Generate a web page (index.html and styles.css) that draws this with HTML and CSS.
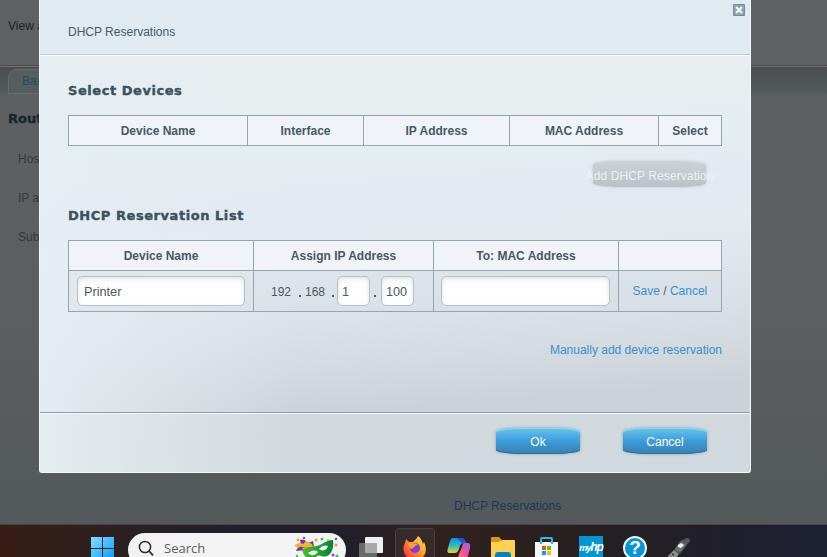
FILE: index.html
```html
<!DOCTYPE html>
<html lang="en">
<head>
<meta charset="utf-8">
<title>DHCP Reservations</title>
<link rel="stylesheet" href="styles.css">
</head>
<body>
<div class="screen">
  <main class="page">
    <div class="view">View all</div>
    <div class="tabs"><span class="tab">Basic</span></div>
    <h2 class="page-title">Router</h2>
    <p class="label">Host</p>
    <p class="label">IP address</p>
    <p class="label">Subnet</p>
    <p class="page-link">DHCP Reservations</p>
  </main>

  <section class="modal">
    <header class="modal-head">DHCP Reservations
      <svg class="close" width="12" height="12" viewBox="0 0 12 12"><rect width="12" height="12" rx="1" fill="#8fa3af"/><rect x=".5" y=".5" width="11" height="11" rx=".5" fill="none" stroke="#748b98"/><path d="M3 3 9 9M9 3 3 9" stroke="#f1f5f7" stroke-width="2.2"/></svg>
    </header>
    <div class="modal-body">
      <h3>Select Devices</h3>
      <div class="grid devices">
        <b>Device Name</b><b>Interface</b><b>IP Address</b><b>MAC Address</b><b>Select</b>
      </div>
      <div class="add-row"><span class="btn disabled">Add DHCP Reservation</span></div>
      <h3>DHCP Reservation List</h3>
      <div class="grid list">
        <b>Device Name</b><b>Assign IP Address</b><b>To: MAC Address</b><b></b>
        <div class="cell"><span class="field name">Printer</span></div>
        <div class="cell ip"><span class="oct first">192</span><i class="dot"></i><span class="oct second">168</span><i class="dot"></i><span class="field octet">1</span><i class="dot last"></i><span class="field octet">100</span></div>
        <div class="cell"><span class="field mac"></span></div>
        <div class="cell actions"><a>Save</a><span> / </span><a>Cancel</a></div>
      </div>
      <div class="manual"><a>Manually add device reservation</a></div>
    </div>
    <footer class="modal-foot"><span class="btn">Ok</span><span class="btn">Cancel</span></footer>
  </section>

  <nav class="taskbar">
    <svg class="win" width="24" height="24" viewBox="0 0 24 24"><defs><linearGradient id="w" x1="0" y1="0" x2="1" y2="1"><stop stop-color="#83dfff"/><stop offset="1" stop-color="#079aff"/></linearGradient></defs><path fill="url(#w)" d="M0 0h11v11H0zM12 0h11v11H12zM0 12h11v11H0zM12 12h11v11H12z"/></svg>
    <div class="search">
      <svg width="16" height="18" viewBox="0 0 16 18"><circle cx="7" cy="7" r="5.6" fill="none" stroke="#292929" stroke-width="1.5"/><path d="m11 11 4 4.4" stroke="#292929" stroke-width="1.8"/></svg>
      <span>Search</span>
      <svg class="mask" width="48" height="26" viewBox="0 0 48 26">
        <defs><linearGradient id="m"><stop stop-color="#4cbf2a"/><stop offset="1" stop-color="#06813a"/></linearGradient></defs>
        <path d="M8 14 6 5q4-2 8 3l5-2 1 6z" fill="#8127b5"/><path d="M10 15 0 11q4-5 9-2l3-3 6 3 2 5z" fill="#f3b42a"/><path d="M12 15 2 16q2-5 7-4l10 1-3 4z" fill="#7430b8"/><path d="m8 13 10-2 1 3-7 2z" fill="#f7c843"/>
        <path fill="url(#m)" fill-rule="evenodd" d="M8 15C14 10 20 13 26 10 31 7 34 5 39 5 40 12 38 19 33 21 27 23 26 18 22 22 18 28 11 25 8 15ZM14 18C17 15 21 15 24 17 21 21 17 21 14 18ZM25 14C28 10 32 10 34 11 33 15 29 17 25 14Z"/>
        <g fill="#8b49e8"><circle cx="10" cy="3" r="1.3"/><circle cx="42" cy="4" r="1.3"/><circle cx="39" cy="20" r="1.5"/></g>
        <g fill="#dfa82d"><circle cx="4" cy="5" r="1.4"/><circle cx="22" cy="5" r="1.5"/><circle cx="34" cy="5" r="1"/><circle cx="42" cy="10" r="1.5"/></g><g fill="#27c96d"><circle cx="28" cy="4" r="1.5"/><circle cx="3" cy="21" r="1.3"/><circle cx="43" cy="21" r="1.5"/></g>
      </svg>
    </div>
    <svg class="task" width="24" height="24" viewBox="0 0 24 24"><rect x="6" width="18" height="16" rx="1" fill="#efefef"/><rect y="6" width="18" height="18" rx="1" fill="#666a69"/><path d="M6 6h12v10H6z" fill="#a9a9a9"/></svg>
    <div class="active"><svg width="24" height="24" viewBox="0 0 24 24"><defs><linearGradient id="f" x1="1" y1="0" x2="0" y2="1"><stop stop-color="#fff044"/><stop offset=".45" stop-color="#ff9a23"/><stop offset="1" stop-color="#ff1657"/></linearGradient></defs><path fill="url(#f)" d="M3 3 6 6 10 6C11 4 14 3 15 0 18 2 19 5 20 8L21 6C26 17 20 24 12 24 2 24-2 14 2 7Z"/><circle cx="12" cy="12" r="5" fill="#7540db"/><path d="M5 8C9 6 13 7 15 9 11 9 12 12 8 13z" fill="#ff9d25"/></svg></div>
    <svg class="copilot" width="24" height="24" viewBox="0 0 24 24"><defs><linearGradient id="c1" x1="0" y1="0" x2="0" y2="1"><stop stop-color="#168bea"/><stop offset=".45" stop-color="#20bbc2"/><stop offset="1" stop-color="#e8d42e"/></linearGradient><linearGradient id="c2" x1="1" y1="0" x2="0" y2="1"><stop stop-color="#a45bf2"/><stop offset=".5" stop-color="#f45292"/><stop offset="1" stop-color="#ffac42"/></linearGradient></defs><path d="M6 1h9c3 0 3 5 5 5h-3c-3 0-4 2-5 6l-1 2c-1 2-3 2-5 2H3c-3 0-3-2-2-5l2-7c1-3 2-3 3-3z" fill="url(#c1)"/><path d="M10 1h5c3 0 3 5 5 5h-3c-3 0-4-2-7-5z" fill="#2354cf"/><path d="M17 6h4c3 0 2 3 2 5l-2 8c-1 3-2 5-5 5H8c3-1 3-3 4-7l3-7c1-3 1-4 2-4z" fill="url(#c2)"/></svg>
    <svg class="folder" width="24" height="22" viewBox="0 0 24 22"><path d="M0 1q0-1 1-1h7l3 3h-1v5H0z" fill="#d89911"/><path d="m0 5h8l3-2h12q1 0 1 1v18H0z" fill="#ffd052"/><path d="M4 22v-4q0-3 3-3h10q3 0 3 3v4z" fill="#087fc9"/></svg>
    <svg class="store" width="23" height="24" viewBox="0 0 23 24"><path d="M6 6V2q0-1 1-1h9q1 0 1 1v4" fill="none" stroke="#31b8f3" stroke-width="2"/><path d="M0 5h23v19H0z" fill="#f7f7f7"/><path d="M6 4v3M17 4v3" stroke="#31b8f3" stroke-width="2"/><path d="M7 9h4v4H7z" fill="#f25022"/><path d="M12 9h4v4h-4z" fill="#7fba00"/><path d="M7 14h4v4H7z" fill="#00a4ef"/><path d="M12 14h4v4h-4z" fill="#ffb900"/></svg>
    <div class="hp"><small>my</small>hp</div>
    <div class="help">?</div>
    <svg class="pen" width="22" height="24" viewBox="0 0 22 24"><path d="m12 3 7-3q3 0 3 3l-10 13-6-4z" fill="#54575b"/><path d="m9 8 5-4 4 3-6 7-5-2z" fill="#6f7275"/><path d="m10 7 3-2 3 2-3 3-3-1z" fill="#efefef"/><path d="m6 12 5 4-6 8H0v-6z" fill="#8d8f90"/><path d="m4 16 2 1M2 19l2 1" stroke="#333" stroke-width="1.5"/></svg>
  </nav>
</div>
</body>
</html>
```
FILE: styles.css
```css
* { box-sizing: border-box; }
body { margin: 0; font: 12px/16px "Liberation Sans", Arial, sans-serif; color: #455966; }
.screen { position: relative; width: 827px; height: 557px; overflow: hidden; display: flex; flex-direction: column; }
.page { height: 525px; flex: none; background: linear-gradient(#5d6164, #5b5f62 60%, #53585a); color: #34383c; border-bottom: 1px solid #494542; }
.view { height: 67px; padding: 18px 0 0 8px; color: #1b2228; border-bottom: 1px solid #747170; box-shadow: inset 0 -1px #474b4e; }
.tabs { height: 27px; padding-left: 8px; background: linear-gradient(#484e51, #555a5d); display: flex; }
.tab { width: 70px; border: 1px solid #686e70; border-radius: 9px 0 0; padding: 3px 0 0 13px; color: #12535a; margin-top: 2px; background: #565d5e; }
h2, h3, p { margin: 0; }
h2, h3 { font: bold 13px/18px "DejaVu Sans", sans-serif; letter-spacing: .55px; -webkit-text-stroke: .4px; color: #3a5260; }
.page h2 { color: #1b252e; padding: 16px 0 0 8px; letter-spacing: 0; }
.label { height: 39px; padding-left: 18px; }
.page-title + .label { margin-top: 23px; }
.page-link { padding: 230px 0 0 454px; color: #173b54; }
.modal { position: absolute; left: 39px; top: 0; width: 712px; height: 473px; border: 1px solid #f6f9fa; border-top: 0; border-radius: 0 0 3px 3px; background: linear-gradient(90deg, #e5eef2e0 0, #e5edf180 16%, #e4edf000 36%), linear-gradient(176deg, #e7eff1 12%, #e4edef 35%, #e2eaf2 43%, #e2ebee 51%, #dae2e8 66%, #ccd3d8 83%, #c8d4d9 100%); }
.modal-head { position: relative; height: 56px; padding: 24px 28px 0; background: #e0ebf1; border-bottom: 1px solid #fff; box-shadow: inset 0 -1px #bdc7cc; }
.close { position: absolute; right: 5px; top: 4px; }
.modal-body { height: 356px; padding: 26px 28px 0; }
.grid { display: grid; width: 654px; margin-top: 15px; border: solid #95a5ad; border-width: 1px 0 0 1px; }
.grid > * { border: solid #95a5ad; border-width: 0 1px 1px 0; }
.grid b { height: 30px; background: #f0f4f8; line-height: 31px; text-align: center; }
.devices { grid-template-columns: 179px 116px 146px 149px 63px; }
.list { grid-template-columns: 185px 180px 185px 103px; }
.add-row { height: 42px; margin-bottom: 19px; padding: 15px 16px 0 0; display: flex; justify-content: flex-end; }
.cell { height: 41px; padding: 5px 0 0 8px; display: flex; background: #d4dce530; }
.cell:nth-child(7) { padding-left: 7px; }
.field { height: 30px; border: 1px solid #b2c4c6; border-radius: 5px; padding: 7px 6px; background: #fff; box-shadow: inset 0 2px 5px #dde3e7; font-size: 12.7px; }
.name { width: 168px; }
.mac { width: 169px; }
.ip { padding-left: 17px; }
.oct { padding-top: 8px; width: 28px; }
.second { width: 27px; margin-left: 4px; }
.dot { width: 2px; height: 2px; margin-top: 19px; background: #455966; }
.octet { width: 33px; padding: 7px 4px; margin-left: 3px; }
.dot.last { margin-left: 4px; }
.octet:last-child { margin-left: 5px; }
.actions { padding: 12px 0 0 13.5px; white-space: pre; }
a { color: #3b8fcc; }
.manual { padding-top: 30px; text-align: right; }
.modal-foot { height: 60px; border-top: 1px solid #8e9fa9; box-shadow: inset 0 1px #f3f7f9; background: #f1f4f430; display: flex; justify-content: flex-end; gap: 43px; padding: 15px 43px 0 0; }
.btn { width: 84px; height: 26px; border-radius: 28px / 4px; line-height: 28px; color: #fff; text-align: center; background: linear-gradient(#63c5ee, #3c98d7 55%, #397fb3); box-shadow: 0 0 3px #526d7c90, inset 0 1px #84daf3, inset 0 -1px #2c709d; }
.btn.disabled { width: 113px; display: flex; justify-content: center; white-space: nowrap; background: linear-gradient(#cbd3d8, #bac2c8); color: #eef2f5; box-shadow: 0 0 3px #bdc6cc; letter-spacing: .1px; line-height: 30px; }
.taskbar { height: 32px; flex: none; display: flex; align-items: flex-start; background: linear-gradient(90deg, #381c14, #2b2020 15%, #20202e 27%, #211f2a 42%, #31211d 53%, #28201f 67%, #211f27 82%, #1c2033); }
.win { margin: 12px 0 0 91px; }
.search { width: 218px; height: 34px; margin: 8px 0 0 13px; border-radius: 17px; background: #f3f3f3; display: flex; padding: 7px 0 0 10px; color: #5b5b5b; font: 13px/17px "Open Sans", sans-serif; }
.search span { margin-left: 10px; width: 68px; }
.mask { margin: -5px 0 0 62px; }
.task { margin: 12px 0 0 13px; }
.active { width: 40px; height: 34px; margin: 3px 0 0 12px; border: 1px solid #4b403d; border-radius: 4px; background: #352b2a; padding: 7px 0 0 7px; }
.copilot { margin: 12px 0 0 12px; }
.folder { margin: 12px 0 0 20px; }
.store { margin: 12px 0 0 20px; }
.hp { width: 24px; height: 24px; margin: 11px 0 0 21px; background: #0595d4; color: #fff; font: italic bold 12px/23px "Liberation Sans", sans-serif; letter-spacing: -1px; white-space: nowrap; text-align: center; }
.hp small { font-size: 9px; font-weight: bold; }
.help { width: 24px; height: 24px; margin: 11px 0 0 20px; border: 2px solid #e9f6fc; border-radius: 50%; background: #0796d5; color: #fff; font: bold 19px/20px "Liberation Sans", sans-serif; text-align: center; }
.pen { margin: 13px 0 0 21px; }
```
